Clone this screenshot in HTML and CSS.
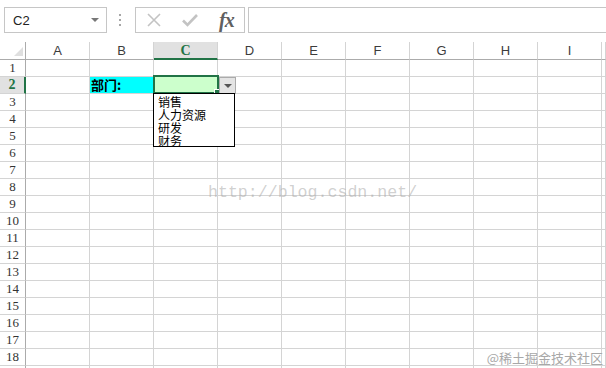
FILE: index.html
```html
<!DOCTYPE html>
<html lang="zh-CN">
<head>
    <meta charset="UTF-8">
    <title>部门下拉列表</title>
    <link rel="stylesheet" href="styles.css">
</head>
<body>
    <div class="formula-bar">
        <div class="name-box">
            <span>C2</span>
            <span class="caret"></span>
        </div>
        <svg class="grip" width="4" height="12" viewBox="0 0 4 12">
            <rect x="1" y="0" width="2" height="2" fill="#a6a6a6"/>
            <rect x="1" y="5" width="2" height="2" fill="#a6a6a6"/>
            <rect x="1" y="10" width="2" height="2" fill="#a6a6a6"/>
        </svg>
        <div class="fx-buttons">
            <svg width="14" height="14" viewBox="0 0 14 14">
                <path d="M1 1 L13 13 M13 1 L1 13" stroke="#c3c3c3" stroke-width="1.6" fill="none"/>
            </svg>
            <svg width="16" height="14" viewBox="0 0 16 14">
                <path d="M1 7.5 L5.5 12 L15 2" stroke="#c3c3c3" stroke-width="2.6" fill="none"/>
            </svg>
            <span class="fx">fx</span>
        </div>
        <div class="formula-input"></div>
    </div>

    <div class="sheet-wrap">
        <div class="sheet" id="sheet"></div>
        <div class="selection"><span class="handle"></span></div>
        <div class="dropdown-btn"><span class="caret"></span></div>
        <ul class="dropdown-list">
            <li>销售</li>
            <li>人力资源</li>
            <li>研发</li>
            <li>财务</li>
        </ul>
        <div class="watermark">http://blog.csdn.net/</div>
    </div>

    <div class="credit">@稀土掘金技术社区</div>

    <script>
        // I is the last full column, the J strip and row 19 are only a sliver
        const cols = ['A', 'B', 'C', 'D', 'E', 'F', 'G', 'H', 'I', ''];
        const sheet = document.getElementById('sheet');

        function cell(cls, text) {
            const div = document.createElement('div');
            div.className = cls;
            if (text) div.textContent = text;
            sheet.appendChild(div);
            return div;
        }

        cell('corner').innerHTML = '<span class="tri"></span>';
        cols.forEach(c => cell(c === 'C' ? 'col-head active' : 'col-head', c));

        for (let r = 1; r <= 19; r++) {
            cell(r === 2 ? 'row-head active' : 'row-head', r < 19 ? String(r) : '');
            cols.forEach(c => {
                if (r === 2 && c === 'B') cell('cell label', '部门:');
                else if (r === 2 && c === 'C') cell('cell picked');
                else cell('cell');
            });
        }
    </script>
</body>
</html>
```

FILE: styles.css
```css
body {
    margin: 0;
    background: #fff;
    font-family: 'Liberation Sans', sans-serif;
    width: 606px;
    height: 368px;
    overflow: hidden;
    position: relative;
}
.formula-bar {
    height: 42px;
    display: flex;
    align-items: flex-start;
    padding-top: 7px;
    box-sizing: border-box;
}
.name-box {
    margin-left: 4px;
    width: 103px;
    height: 26px;
    box-sizing: border-box;
    border: 1px solid #c6c6c6;
    display: flex;
    align-items: center;
    justify-content: space-between;
    padding: 0 7px 0 8px;
    font-size: 13px;
    color: #222;
}
.caret {
    width: 0;
    height: 0;
    border-left: 4px solid transparent;
    border-right: 4px solid transparent;
    border-top: 4px solid #777;
}
.grip {
    margin: 7px 13px 0 11px;
}
.fx-buttons {
    width: 110px;
    height: 26px;
    box-sizing: border-box;
    border: 1px solid #c6c6c6;
    display: flex;
    align-items: center;
    padding-left: 11px;
}
.fx-buttons svg:first-child {
    margin-right: 21px;
}
.fx-buttons svg:nth-child(2) {
    margin-right: 21px;
}
.fx {
    font-family: 'Liberation Serif', serif;
    font-style: italic;
    font-weight: bold;
    font-size: 20px;
    color: #606060;
    letter-spacing: -1px;
    line-height: 20px;
}
.formula-input {
    margin-left: 3px;
    flex: 1;
    height: 26px;
    box-sizing: border-box;
    border: 1px solid #c6c6c6;
    border-right: none;
}
.sheet-wrap {
    position: relative;
    overflow: hidden;
}
.sheet {
    display: grid;
    grid-template-columns: 26px repeat(9, 64px) 1fr;
    grid-template-rows: 18px;
    grid-auto-rows: 17px;
}
.sheet > div {
    box-sizing: border-box;
}
.corner {
    border-right: 1px solid #ababab;
    border-bottom: 1px solid #ababab;
    position: relative;
}
.tri {
    position: absolute;
    right: 2px;
    bottom: 3px;
    width: 0;
    height: 0;
    border-left: 9px solid transparent;
    border-bottom: 9px solid #dfdfdf;
}
.col-head {
    border-right: 1px solid #d4d4d4;
    border-bottom: 1px solid #ababab;
    text-align: center;
    font-size: 13px;
    line-height: 17px;
    color: #3c3c3c;
}
.col-head.active {
    background: #e1e1e1;
    color: #217346;
    font-weight: bold;
    font-family: 'Liberation Serif', serif;
    font-size: 14px;
    border-bottom: 2px solid #217346;
}
.row-head {
    border-right: 1px solid #ababab;
    border-bottom: 1px solid #d4d4d4;
    text-align: center;
    font-family: 'Liberation Serif', serif;
    font-size: 13px;
    line-height: 16px;
    color: #333;
}
.row-head.active {
    background: #e1e1e1;
    color: #217346;
    font-weight: bold;
    font-size: 14px;
    border-right: 2px solid #217346;
}
.cell {
    border-right: 1px solid #d4d4d4;
    border-bottom: 1px solid #d4d4d4;
}
.cell.label {
    background: #00ffff;
    font-family: 'Noto Sans CJK SC', sans-serif;
    font-weight: bold;
    font-size: 13px;
    line-height: 16px;
    padding-left: 1px;
    color: #000;
}
.cell.picked {
    background: #ccffcc;
}
.selection {
    position: absolute;
    left: 153px;
    top: 33px;
    width: 66px;
    height: 19px;
    box-sizing: border-box;
    border: 2px solid #217346;
}
.handle {
    position: absolute;
    right: -4px;
    bottom: -4px;
    width: 5px;
    height: 5px;
    background: #217346;
    border: 1px solid #fff;
}
.dropdown-btn {
    position: absolute;
    left: 219px;
    top: 35px;
    width: 17px;
    height: 17px;
    box-sizing: border-box;
    background: #e4e4e4;
    border: 1px solid #ababab;
    display: flex;
    align-items: center;
    justify-content: center;
}
.dropdown-btn .caret {
    border-top-color: #555;
}
.dropdown-list {
    position: absolute;
    left: 153px;
    top: 51px;
    width: 82px;
    height: 54px;
    box-sizing: border-box;
    margin: 0;
    padding: 1px 0 0 4px;
    list-style: none;
    background: #fff;
    border: 1px solid #000;
    font-family: 'Noto Sans CJK SC', sans-serif;
    font-size: 12px;
    line-height: 13px;
    color: #000;
}
.watermark {
    position: absolute;
    left: 208px;
    top: 141px;
    font-family: 'Liberation Mono', monospace;
    font-size: 16.6px;
    line-height: 20px;
    color: rgba(170, 170, 170, 0.55);
}
.credit {
    position: absolute;
    right: 3px;
    bottom: 3px;
    font-family: 'Noto Sans CJK SC', sans-serif;
    font-size: 13px;
    line-height: 15px;
    color: #a8a8a8;
}
```
